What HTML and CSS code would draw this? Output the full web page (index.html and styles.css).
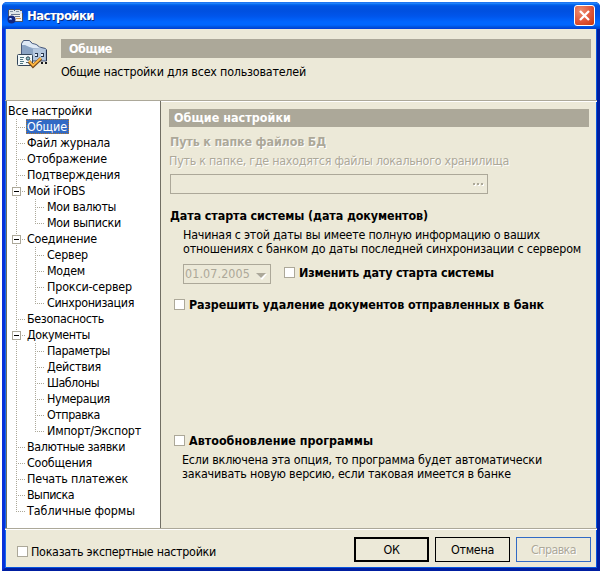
FILE: index.html
```html
<!DOCTYPE html>
<html lang="ru">
<head>
<meta charset="utf-8">
<title>Настройки</title>
<link rel="stylesheet" href="styles.css">
</head>
<body>
<div class="window">
  <div class="titlebar">
    <svg class="app-icon" width="16" height="16" viewBox="0 0 16 16" shape-rendering="crispEdges">
      <path d="M1 2h1V1h5v1h1V1h5v1h2v3h1v9H5V9H1z" fill="#4a5468"/>
      <path d="M2 2h5v1h1V2h5v1h2v3H2z" fill="#dfe5ea"/>
      <path d="M3 3h3v1H3zM9 3h3v1H9z" fill="#8494a8"/>
      <path d="M2 6h13v7H6V8H2z" fill="#f7f5ee"/>
      <path d="M4 6h9v1H4zM8 8h5v1H8z" fill="#6d7890"/>
      <path d="M9 10h5v1H9z" fill="#d39a58"/>
      <circle cx="4.500" cy="11.500" r="4" fill="#14277f" shape-rendering="auto"/>
      <path d="M2 10h3v2H2z" fill="#6d8fe8"/><path d="M3 10h1v1H3z" fill="#dce6ff"/>
    </svg>
    <span class="title" data-w="67">Настройки</span>
    <button class="close" aria-label="Закрыть"><svg width="11" height="11" viewBox="0 0 11 11"><path d="M1 1l9 9M10 1l-9 9" stroke="#fff" stroke-width="2.3"/></svg></button>
  </div>
  <div class="header">
    <svg class="head-icon" width="31" height="30" viewBox="0 0 31 30">
      <path d="M4.500 14V3.500L6.500.5h6l3 3 4 1 3 2.500 6 1.500 1 1V21h-14" fill="#9fb4cf" stroke="#4a5a7c"/>
      <path d="M5 4l2-3h5l3 3 4 1 3 2.500 4 1-10-.5L5 5z" fill="#dfe9f5"/>
      <path d="M5 5h3l8 4v5H5z" fill="#8ba4c4"/>
      <path d="M16 9h12v11H16z" fill="#b3c6de"/>
      <path d="M29.500 10v11" stroke="#25324d"/>
      <path d="M18 13h3v4h-3zM24 13h3v4h-3z" fill="#26354d"/><path d="M18 14h2v2h-2zM24 14h2v2h-2z" fill="#e6eef8"/>
      <rect x=".5" y="14.500" width="15" height="11" rx="1" fill="#f2f8f8" stroke="#34465a"/>
      <path d="M3 17.500h4M3 19.500h3M3 21.500h4M3 23.500h3" stroke="#4f7783"/>
      <circle cx="11" cy="18.500" r="1.700" fill="#8cc4c4" stroke="#345"/><path d="M9 22.500h4" stroke="#567"/>
      <path d="M12 21.500l4 4.500 8-7.500" fill="none" stroke="#744719" stroke-width="3.400"/>
      <path d="M12 21l4 4.500 8-7.500" fill="none" stroke="#ffb640" stroke-width="1.900"/>
      <path d="M24 22h2v2h-2zM28 22h2v2h-2z" fill="#17181c"/>
    </svg>
    <div class="header-copy">
      <div class="band head-band"><span data-w="43">Общие</span></div>
      <div class="line"><span data-w="245">Общие настройки для всех пользователей</span></div>
    </div>
  </div>
  <div class="body">
    <div class="tree">
      <div class="node root"><span data-w="84">Все настройки</span></div>
      <div class="node"><span class="selected"><span data-w="40">Общие</span></span></div>
      <div class="node"><span data-w="83">Файл журнала</span></div>
      <div class="node"><span data-w="80">Отображение</span></div>
      <div class="node"><span data-w="93">Подтверждения</span></div>
      <div class="node"><i class="box"></i><span data-w="58">Мой iFOBS</span></div>
      <div class="node child"><span data-w="69">Мои валюты</span></div>
      <div class="node child last"><span data-w="74">Мои выписки</span></div>
      <div class="node"><i class="box"></i><span data-w="70">Соединение</span></div>
      <div class="node child"><span data-w="41">Сервер</span></div>
      <div class="node child"><span data-w="38">Модем</span></div>
      <div class="node child"><span data-w="85">Прокси-сервер</span></div>
      <div class="node child last"><span data-w="87">Синхронизация</span></div>
      <div class="node"><span data-w="77">Безопасность</span></div>
      <div class="node"><i class="box"></i><span data-w="63">Документы</span></div>
      <div class="node child"><span data-w="63">Параметры</span></div>
      <div class="node child"><span data-w="54">Действия</span></div>
      <div class="node child"><span data-w="52">Шаблоны</span></div>
      <div class="node child"><span data-w="63">Нумерация</span></div>
      <div class="node child"><span data-w="53">Отправка</span></div>
      <div class="node child last"><span data-w="94">Импорт/Экспорт</span></div>
      <div class="node"><span data-w="98">Валютные заявки</span></div>
      <div class="node"><span data-w="65">Сообщения</span></div>
      <div class="node"><span data-w="101">Печать платежек</span></div>
      <div class="node"><span data-w="47">Выписка</span></div>
      <div class="node end"><span data-w="108">Табличные формы</span></div>
    </div>
    <div class="panel">
      <div class="band"><span data-w="117">Общие настройки</span></div>
      <div class="line strong disabled path-title"><span data-w="156">Путь к папке файлов БД</span></div>
      <div class="line disabled path-note"><span data-w="340">Путь к папке, где находятся файлы локального хранилища</span></div>
      <div class="path-field"><i></i><i></i><i></i></div>
      <div class="line strong date-title"><span data-w="258">Дата старта системы (дата документов)</span></div>
      <div class="note date-note">
        <div class="line"><span data-w="357">Начиная с этой даты вы имеете полную информацию о ваших</span></div>
        <div class="line"><span data-w="398">отношениях с банком до даты последней синхронизации с сервером</span></div>
      </div>
      <div class="date-row">
        <div class="combo"><span data-w="65">01.07.2005</span><svg width="11" height="7" viewBox="0 0 11 7"><path d="M1 1h10L6 7z" fill="#fff"/><path d="M0 0h10L5 5z" fill="#aca899"/></svg></div>
        <label class="check"><i></i><span class="strong" data-w="195">Изменить дату старта системы</span></label>
      </div>
      <label class="check allow"><i></i><span class="strong" data-w="355">Разрешить удаление документов отправленных в банк</span></label>
      <label class="check update"><i></i><span class="strong" data-w="184">Автообновление программы</span></label>
      <div class="note update-note">
        <div class="line"><span data-w="360">Если включена эта опция, то программа будет автоматически</span></div>
        <div class="line"><span data-w="329">закачивать новую версию, если таковая имеется в банке</span></div>
      </div>
    </div>
  </div>
  <div class="footer">
    <label class="check expert"><i></i><span data-w="185">Показать экспертные настройки</span></label>
    <button class="btn default"><span data-w="16">ОК</span></button>
    <button class="btn"><span data-w="43">Отмена</span></button>
    <button class="btn help"><span class="disabled" data-w="45">Справка</span></button>
  </div>
</div>
<script src="labels.js"></script>
</body>
</html>
```
FILE: labels.js
```js
// Tracks each label so that its run length equals its data-w value.
document.querySelectorAll('[data-w]').forEach(function (el) {
  var natural = el.getBoundingClientRect().width;
  var spacing = (Number(el.dataset.w) - natural) / el.textContent.length;
  el.style.letterSpacing = spacing.toFixed(3) + 'px';
});
```
FILE: styles.css
```css
* { box-sizing: border-box; }
body {
  margin: 0;
  width: 604px;
  height: 574px;
  overflow: hidden;
  background: #fff;
  color: #000;
  font: 12.4px/14px "DejaVu Sans Condensed", "DejaVu Sans", sans-serif;
  font-stretch: condensed;
}
span { white-space: nowrap; }
button { font: inherit; padding: 0; }
.window {
  width: 598px;
  height: 569px;
  margin: 2px 0 0 2px;
  background: #ece9d8;
  border: solid;
  border-width: 0 3px 3px;
  border-color: #0831d9;
  border-right-color: #001ea0;
  border-bottom-color: #001ea0;
  border-radius: 5px 5px 0 0;
  box-shadow: inset 1px 0 #166aee, inset -1px 0 #0855dd, inset 0 -1px #0855dd;
}
.titlebar {
  height: 27px;
  margin: 0 -3px;
  padding: 0 5px;
  display: flex;
  align-items: center;
  border-radius: 5px 5px 0 0;
  background: linear-gradient(#0058e6 0, #3a93ff 1px, #0870f4 2px, #0054e3 4px, #0050e0 9px, #0055eb 14px, #0066ff 20px, #0066ff 23px, #0052dc 25px, #003dd7 27px);
}
.title { margin-left: 4px; color: #fff; font: bold 13px/18px "DejaVu Sans Condensed", "DejaVu Sans", sans-serif; font-stretch: condensed; text-shadow: 1px 1px #0a2b83; }
.close {
  width: 21px;
  height: 21px;
  margin-left: auto;
  display: grid;
  place-items: center;
  border: 1px solid #fff;
  border-radius: 3px;
  background: radial-gradient(circle at 30% 25%, #ee8d6e, #e0563a 55%, #c93508);
}
.header { height: 71px; padding: 10px 6px 0 12px; display: flex; }
.head-icon { margin-top: 1px; flex: none; }
.header-copy { width: 530px; margin-left: 13px; }
.band { height: 18px; padding: 2px 0 0 5px; background: #aca899; color: #fff; font-weight: bold; }
.head-band { height: 19px; padding: 3px 0 0 8px; margin-bottom: 7px; }
.line { height: 14px; }
.strong { font-weight: bold; }
.disabled { color: #aca899; text-shadow: 1px 1px #fff; }
.body { height: 429px; display: flex; border-top: 1px solid #aca899; border-bottom: 1px solid #aca899; }
.tree { width: 155px; margin-left: 1px; padding-top: 2px; background: #fff; border: solid #716f64; border-width: 0 1px; }
.node {
  height: 16px;
  padding-left: 20px;
  line-height: 16px;
  position: relative;
  background:
    repeating-linear-gradient(#aca899 0 1px, transparent 1px 2px) 9px 0 / 1px 16px no-repeat,
    repeating-linear-gradient(90deg, #aca899 0 1px, transparent 1px 2px) 9px 8px / 9px 1px no-repeat;
}
.node.root { padding-left: 1px; background: none; }
.node.child {
  padding-left: 40px;
  background:
    repeating-linear-gradient(#aca899 0 1px, transparent 1px 2px) 9px 0 / 1px 16px no-repeat,
    repeating-linear-gradient(#aca899 0 1px, transparent 1px 2px) 28px 0 / 1px 16px no-repeat,
    repeating-linear-gradient(90deg, #aca899 0 1px, transparent 1px 2px) 28px 8px / 9px 1px no-repeat;
}
.node.child.last { background-size: 1px 16px, 1px 9px, 9px 1px; }
.node.end { background-size: 1px 9px, 9px 1px; }
.selected {
  display: block;
  width: 43px;
  height: 15px;
  margin-left: -1px;
  line-height: 14px;
  color: #fff;
  background: #316ac5;
  border: 1px dotted #b5792f;
}
.box {
  position: absolute;
  left: 5px;
  top: 4px;
  width: 9px;
  height: 9px;
  border: 1px solid #aca899;
  background: linear-gradient(#000, #000) 1px 3px / 5px 1px no-repeat #fff;
}
.panel { flex: 1; padding: 8px 8px 0 8px; border-top: 1px solid #fff; display: flex; flex-direction: column; align-items: flex-start; }
.panel .band { width: 420px; margin-top: -1px; }
.path-title { margin: 8px 0 5px 1px; }
.path-note { margin-bottom: 6px; }
.path-field { width: 318px; height: 20px; margin-left: 1px; border: 1px solid #aca899; display: flex; justify-content: flex-end; gap: 2px; padding: 8px 4px 0 0; }
.path-field i { width: 2px; height: 2px; background: #aca899; box-shadow: 1px 1px #fff; }
.date-title { margin: 15px 0 5px 1px; }
.date-note { margin-left: 14px; }
.date-row { display: flex; margin: 8px 0 0 14px; height: 20px; }
.combo { width: 88px; height: 20px; border: 1px solid #aca899; color: #aca899; display: flex; padding: 2px 3px 0 1px; justify-content: space-between; }
.combo svg { margin-top: 6px; }
.check { height: 14px; display: flex; }
.check i { width: 11px; height: 11px; margin: 2px 4px 0 0; border: 1px solid #aca899; background: #fff; flex: none; }
.date-row .check { margin: 2px 0 0 13px; }
.allow { margin: 14px 0 0 5px; }
.allow i, .update i, .date-row i { margin-top: 1px; }
.update { margin: 122px 0 0 5px; }
.update-note { margin: 5px 0 0 13px; }
.footer { height: 39px; display: flex; align-items: flex-start; border-top: 1px solid #fff; padding: 7px 6px 0 12px; gap: 6px; }
.expert { margin: 8px auto 0 0; }
.expert i { margin-right: 3px; margin-top: 1px; }
.btn { width: 75px; height: 25px; border: 1px solid #000; background: #ece9d8; color: #000; line-height: 14px; }
.default { border-width: 2px; }
.help { border-color: #316ac5; }
```
